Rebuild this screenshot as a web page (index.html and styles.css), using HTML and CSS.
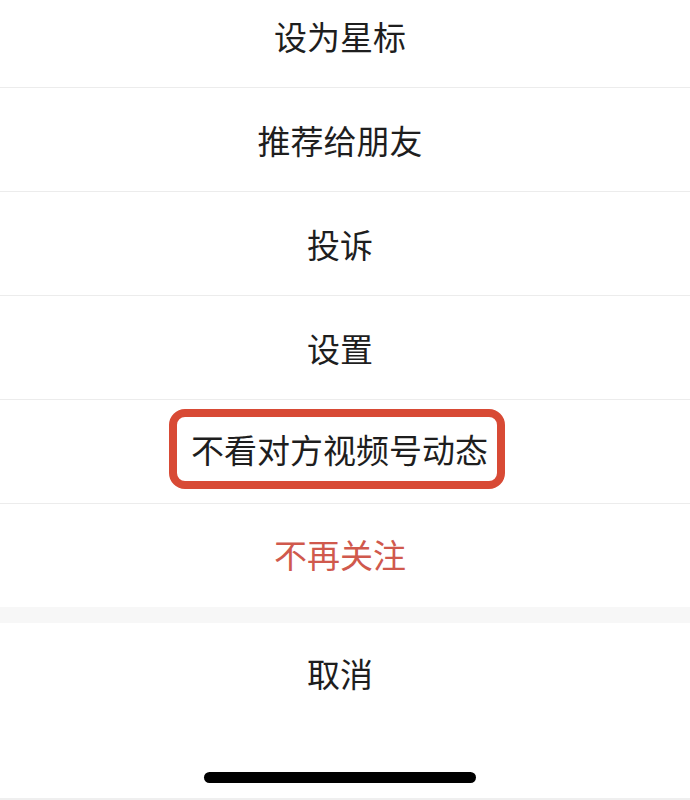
FILE: index.html
```html
<!DOCTYPE html>
<html>
<head>
    <meta name="viewport" content="width=device-width, initial-scale=1">
    <link rel="stylesheet" href="styles.css">
</head>
<body>
    <div class="sheet">
        <div class="menu">
            <div class="item first">设为星标</div>
            <div class="item">推荐给朋友</div>
            <div class="item">投诉</div>
            <div class="item">设置</div>
            <div class="item"><span class="mark">不看对方视频号动态</span></div>
            <div class="item danger">不再关注</div>
        </div>
        <div class="gap"></div>
        <div class="item cancel">取消</div>
        <div class="safe">
            <div class="home-bar"></div>
        </div>
    </div>
</body>
</html>
```

FILE: styles.css
```css
body {
    margin: 0;
    background: #ffffff;
    font-family: "Noto Sans CJK SC", "Noto Sans", sans-serif;
    overflow: hidden;
}
.sheet {
    width: 690px;
    height: 800px;
    overflow: hidden;
    background: #ffffff;
}
.item {
    box-sizing: border-box;
    height: 104px;
    display: flex;
    align-items: center;
    justify-content: center;
    padding-right: 10px;
    font-size: 33px;
    color: #1e1e1e;
    border-bottom: 1px solid #ececec;
}
.item.first {
    margin-top: -16px;
}
.menu .item:last-child {
    border-bottom: none;
    height: 103px;
}
.danger {
    color: #d0594d;
    padding-bottom: 3px;
}
.mark {
    display: inline-flex;
    align-items: center;
    height: 64px;
    padding: 0 9px 0 14px;
    margin: -6px 6px 0 0;
    border: 8px solid #d84a35;
    border-radius: 16px;
}
.gap {
    height: 16px;
    background: #f7f7f7;
}
.cancel {
    border-bottom: none;
    padding-bottom: 4px;
}
.safe {
    height: 71px;
    padding-right: 10px;
    border-bottom: 3px solid #efefef;
    display: flex;
    justify-content: center;
}
.home-bar {
    margin-top: 45px;
    width: 272px;
    height: 11px;
    border-radius: 6px;
    background: #000000;
}
```
